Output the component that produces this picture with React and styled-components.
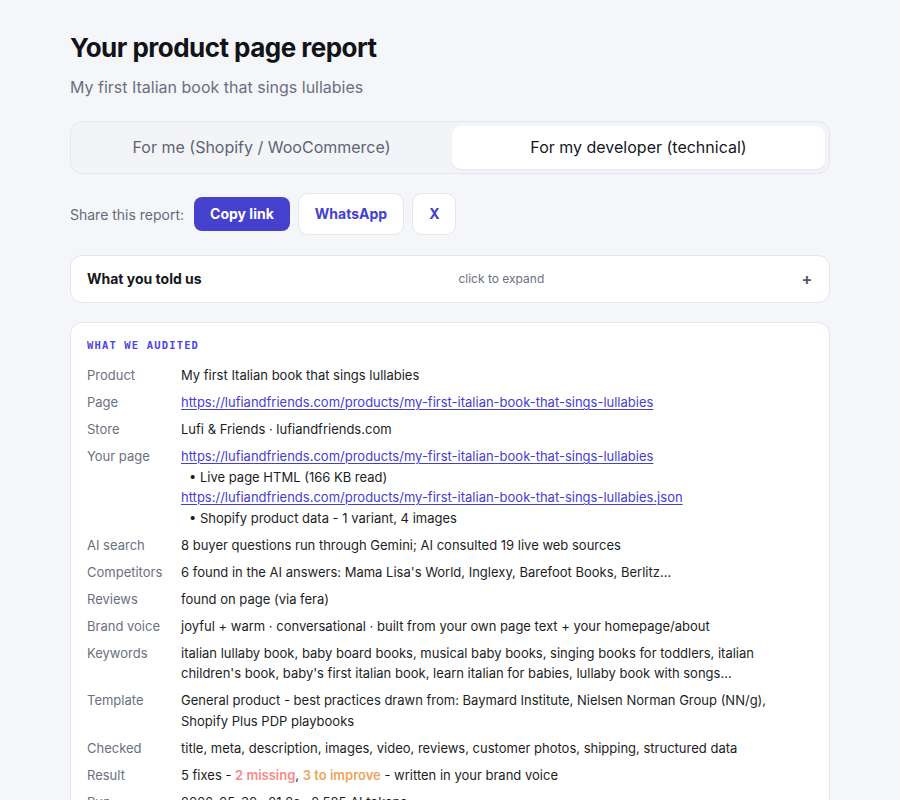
import React from "react";
import styled, { createGlobalStyle } from "styled-components";

const Global = createGlobalStyle`
  html, body { margin: 0; padding: 0; background: #f5f6fa; }
  body { font-family: Inter, "Noto Sans", sans-serif; color: #111318; -webkit-font-smoothing: antialiased; }
  * { box-sizing: border-box; }
`;

const Page = styled.main`
  max-width: 760px;
  margin: 0 auto;
  padding: 32px 0 40px;
`;

const Title = styled.h1`
  margin: 0;
  font-size: 26px;
  line-height: 31px;
  font-weight: 700;
  letter-spacing: -0.02em;
  color: #121318;
`;

const Subtitle = styled.p`
  margin: 12px 0 0;
  font-size: 16px;
  line-height: 24px;
  color: #6b7080;
`;

const Tabs = styled.div`
  margin-top: 22px;
  display: grid;
  grid-template-columns: 1fr 1fr;
  gap: 4px;
  padding: 4px;
  border: 1px solid #e4e6ec;
  border-radius: 12px;
  background: #f3f4f8;
`;

const Tab = styled.button`
  font: inherit;
  font-size: 16px;
  line-height: 23px;
  padding: 10px;
  border: 0;
  border-radius: 9px;
  background: ${(p) => (p.$active ? "#ffffff" : "transparent")};
  color: ${(p) => (p.$active ? "#15171c" : "#5e6474")};
  box-shadow: ${(p) => (p.$active ? "0 1px 2px rgba(16,24,40,0.06)" : "none")};
  cursor: pointer;
`;

const ShareRow = styled.div`
  margin-top: 19px;
  display: flex;
  align-items: center;
  gap: 8px;
`;

const ShareLabel = styled.span`
  font-size: 14px;
  color: #666b78;
  margin-right: 2px;
`;

const ShareButton = styled.button`
  font: inherit;
  font-size: 14px;
  font-weight: 700;
  line-height: 20px;
  cursor: pointer;
  ${(p) =>
    p.$primary
      ? `
    padding: 7px 16px;
    border: 0;
    border-radius: 8px;
    background: #4640cf;
    color: #ffffff;
  `
      : `
    padding: 10px 16px;
    border: 1px solid #e4e6ec;
    border-radius: 10px;
    background: #ffffff;
    color: #4640cf;
  `}
`;

const Card = styled.section`
  background: #ffffff;
  border: 1px solid #e4e6ec;
  border-radius: 12px;
`;

const Collapsible = styled(Card)`
  margin-top: 20px;
  display: flex;
  align-items: center;
  justify-content: space-between;
  padding: 14px 16px;
  line-height: 18px;
  cursor: pointer;
`;

const CollapsibleTitle = styled.span`
  font-size: 14px;
  font-weight: 700;
  color: #15171c;
`;

const Hint = styled.span`
  font-size: 12px;
  color: #6b7080;
`;

const Plus = styled.span`
  font-size: 16px;
  font-weight: 700;
  color: #555a66;
  width: 12px;
  text-align: center;
`;

const AuditCard = styled(Card)`
  margin-top: 19px;
  padding: 16px 16px 20px;
`;

const Eyebrow = styled.h2`
  margin: 0;
  font-family: "DejaVu Sans Mono", "Liberation Mono", monospace;
  font-size: 10.5px;
  line-height: 12px;
  font-weight: 700;
  letter-spacing: 1.15px;
  color: #4f46e5;
`;

const Grid = styled.dl`
  margin: 14px 0 0;
  display: grid;
  grid-template-columns: 94px 1fr;
  row-gap: 6.5px;
  font-size: 13px;
  line-height: 20.5px;
`;

const Label = styled.dt`
  color: #6b7080;
`;

const Value = styled.dd`
  margin: 0;
  color: #1c1e24;
`;

const Link = styled.a`
  color: #4640cf;
  text-decoration: underline;
  text-underline-offset: 2px;
  text-decoration-thickness: 1px;
  display: block;
`;

const Bullet = styled.div`
  padding-left: 8px;
`;

const Tone = styled.span`
  font-weight: 600;
  color: ${(p) => p.$color};
`;

const url = "https://lufiandfriends.com/products/my-first-italian-book-that-sings-lullabies";

export default function App() {
  return (
    <>
      <Global />
      <Page>
        <Title>Your product page report</Title>
        <Subtitle>My first Italian book that sings lullabies</Subtitle>

        <Tabs>
          <Tab>For me (Shopify / WooCommerce)</Tab>
          <Tab $active>For my developer (technical)</Tab>
        </Tabs>

        <ShareRow>
          <ShareLabel>Share this report:</ShareLabel>
          <ShareButton $primary>Copy link</ShareButton>
          <ShareButton>WhatsApp</ShareButton>
          <ShareButton>X</ShareButton>
        </ShareRow>

        <Collapsible>
          <CollapsibleTitle>What you told us</CollapsibleTitle>
          <Hint>click to expand</Hint>
          <Plus>+</Plus>
        </Collapsible>

        <AuditCard>
          <Eyebrow>WHAT WE AUDITED</Eyebrow>
          <Grid>
            <Label>Product</Label>
            <Value>My first Italian book that sings lullabies</Value>

            <Label>Page</Label>
            <Value><Link href="#">{url}</Link></Value>

            <Label>Store</Label>
            <Value>Lufi &amp; Friends · lufiandfriends.com</Value>

            <Label>Your page</Label>
            <Value>
              <Link href="#">{url}</Link>
              <Bullet>• Live page HTML (166 KB read)</Bullet>
              <Link href="#">{url}.json</Link>
              <Bullet>• Shopify product data - 1 variant, 4 images</Bullet>
            </Value>

            <Label>AI search</Label>
            <Value>8 buyer questions run through Gemini; AI consulted 19 live web sources</Value>

            <Label>Competitors</Label>
            <Value>6 found in the AI answers: Mama Lisa's World, Inglexy, Barefoot Books, Berlitz...</Value>

            <Label>Reviews</Label>
            <Value>found on page (via fera)</Value>

            <Label>Brand voice</Label>
            <Value>joyful + warm · conversational · built from your own page text + your homepage/about</Value>

            <Label>Keywords</Label>
            <Value>
              italian lullaby book, baby board books, musical baby books, singing books for toddlers, italian
              children's book, baby's first italian book, learn italian for babies, lullaby book with songs...
            </Value>

            <Label>Template</Label>
            <Value>
              General product - best practices drawn from: Baymard Institute, Nielsen Norman Group (NN/g),
              Shopify Plus PDP playbooks
            </Value>

            <Label>Checked</Label>
            <Value>title, meta, description, images, video, reviews, customer photos, shipping, structured data</Value>

            <Label>Result</Label>
            <Value>
              5 fixes - <Tone $color="#f58a8a">2 missing</Tone>, <Tone $color="#eba55c">3 to improve</Tone> - written in your brand voice
            </Value>

            <Label>Run</Label>
            <Value>2026-05-30 · 21.2s · 2,585 AI tokens</Value>
          </Grid>
        </AuditCard>
      </Page>
    </>
  );
}
